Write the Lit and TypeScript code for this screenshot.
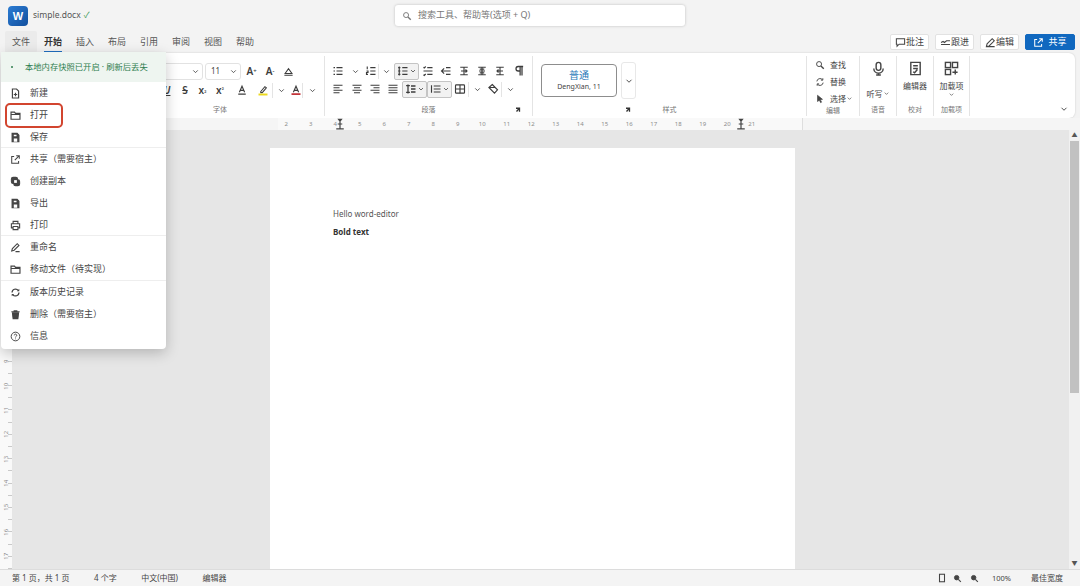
import { LitElement, html, svg, css, nothing } from 'lit'
import { customElement } from 'lit/decorators.js'

const I: Record<string, unknown> = {
	chev: svg`<path d="M4 6l4 4 4-4"/>`,
	search: svg`<circle cx="6.5" cy="6.5" r="4"/><path d="M9.5 9.5l4.5 4.5" stroke-width="2.2"/>`,
	bullets: svg`<path d="M2 3.5h2M2 8h2M2 12.5h2M6 3.5h8M6 8h8M6 12.5h8"/>`,
	numbered: svg`<path d="M3 2v3.5M2 8h2v2H2v2.500h2M7 3.500h7M7 8h7M7 12.500h7"/>`,
	multi: svg`<path d="M3 2v12M1.500 3.500h3M1.500 8h3M1.500 12.500h3M7 3.500h7M7 8h7M7 12.500h7"/>`,
	sort: svg`<path d="M2 3l1 1 2-2M7 3.500h7M2 8h12M2 13l1 1 2-2M7 12.500h7"/>`,
	outdent: svg`<path d="M2 8h12M5.500 4.500L2 8l3.500 3.500M8 3.500h6M8 12.500h6"/>`,
	ltr: svg`<path d="M3 3h10M3 13h10M8 3v10M4 8h8M10 6l2 2-2 2"/>`,
	mid: svg`<path d="M3 3h10M3 13h10M8 3v10M4 8h8M5 5.500h6M5 10.500h6"/>`,
	rtl: svg`<path d="M3 3h10M3 13h10M8 3v10M4 8h8M6 6L4 8l2 2"/>`,
	pilcrow: svg`<path d="M12 2v12M9.500 2v12M13.500 2H7a3 3 0 0 0 0 6h2.500" stroke-width="1.700"/>`,
	left: svg`<path d="M2 3h12M2 6.300h8M2 9.600h12M2 13h8"/>`,
	center: svg`<path d="M2 3h12M4 6.300h8M2 9.600h12M4 13h8"/>`,
	right: svg`<path d="M2 3h12M6 6.300h8M2 9.600h12M6 13h8"/>`,
	justify: svg`<path d="M2 3h12M2 6.300h12M2 9.600h12M2 13h12"/>`,
	lines: svg`<path d="M4 2v12M1.500 3.500h5M1.500 12.500h5M8 4h6M8 8h6M8 12h6" stroke-width="1.700"/>`,
	indent: svg`<path d="M2 3v10M5 4h9M5 8h9M5 12h9"/>`,
	table: svg`<rect x="2" y="2.500" width="12" height="11" rx="1"/><path d="M2 8h12M8 2.500v11"/>`,
	fill: svg`<path d="M7 2l7 7-4 4.500-7.500-7.500zM2.500 6h9" stroke-width="1.500"/>`,
	a: svg`<path d="M4.500 11L8 3l3.500 8M5.800 8.500h4.400M3 13.500h10" stroke-width="1.500"/>`,
	clear: svg`<path d="M3 11l5-7 5 7zM2 13.500h12" stroke-width="1.500"/>`,
	marker: svg`<path d="M5 10l5.500-6.500 2 1.700L7 11.500H5z" stroke-width="1.400"/><path d="M2 14h12" stroke="#ecd91e" stroke-width="2.600"/>`,
	redA: svg`<path d="M4.500 11L8 3l3.500 8M5.800 8.500h4.400" stroke-width="1.500"/><path d="M2 13.500h12" stroke="#c2353a" stroke-width="2.400"/>`,
	launch: svg`<path d="M4 4.500h7v7M5 11l5.500-6" stroke-width="2.600"/>`,
	replace: svg`<path d="M3 7a5 5 0 0 1 9-2.500M13 9a5 5 0 0 1-9 2.500M12.500 2v3h-3M3.500 14v-3h3" stroke-width="1.500"/>`,
	cursor: svg`<path d="M4 2l8 6.500-3.500.500 2 4-1.500.800-2-4L4 12z" fill="currentColor" stroke-width="1"/>`,
	mic: svg`<rect x="5.500" y="1.500" width="5" height="8.500" rx="2.500"/><path d="M3 8a5 5 0 0 0 10 0M8 13v2M5.500 15h5"/>`,
	editor: svg`<path d="M3 1.500h10v13H3zM5.500 5h5M5.500 8h5M5.500 11.500l1.500 1 3-3.500"/>`,
	addins: svg`<rect x="1.500" y="1.500" width="5.500" height="5.500"/><rect x="9" y="1.500" width="5.500" height="5.500"/><rect x="1.500" y="9" width="5.500" height="5.500"/><path d="M12 9v5.500M9 12h5.500"/>`,
	comment: svg`<path d="M2 2.500h12v8H6l-3 3v-3H2z"/>`,
	track: svg`<path d="M1.500 11h13M1.500 8l3-1.500 2 1.500 3-2.500h5"/>`,
	pen: svg`<path d="M2 14l1-4 7.500-7.500 3 3L6 13zM2 14h12"/>`,
	share: svg`<path d="M9 2.500h4.500V7M13.500 2.500L7 9M6 3.500H2.500v10h10V10"/>`,
	newdoc: svg`<path d="M3.500 1.500h6l3 3v10h-9zM8 7v5M5.500 9.500h5" stroke-width="1.700"/>`,
	folder: svg`<path d="M1.500 3h5l1.500 2h6.500v8.500h-13zM1.500 6.500h13" stroke-width="1.700"/>`,
	save: svg`<path d="M3 2h7.500L13 4.500V14H3z" fill="currentColor"/><path d="M5.500 4h4v2h-4zM5.500 9.500h5V14h-5z" fill="#fff" stroke="none"/>`,
	copy: svg`<rect x="2" y="2" width="9" height="9" rx="2.500" fill="currentColor"/><rect x="5.500" y="5.500" width="8.500" height="8.500" rx="2.500" fill="currentColor"/><rect x="6" y="6" width="4" height="4" fill="#fff" stroke="none"/>`,
	print: svg`<path d="M4.500 5V2h7v3M4.500 11.500H2V5.500h12v6h-2.500M4.500 9.500h7V14h-7z" stroke-width="1.600"/>`,
	pencil: svg`<path d="M2.500 13l1-3.500 7-7 2.500 2.500-7 7zM8 14h6" stroke-width="1.600"/>`,
	history: svg`<path d="M3 8a5 5 0 0 1 9-3M13 8a5 5 0 0 1-9 3" stroke-width="1.800"/><path d="M13.500 2.500V6H10zM2.500 13.500V10H6z" fill="currentColor" stroke="none"/>`,
	trash: svg`<path d="M2 4h12M6 4V2.500h4V4" stroke-width="1.500"/><path d="M3.500 5.500h9L11.500 14h-7z" fill="currentColor"/>`,
	info: svg`<circle cx="8" cy="8" r="6.300" stroke-width="1.400"/><path d="M6.200 6.300a1.800 1.800 0 1 1 2.700 1.600c-.6.300-.9.700-.9 1.400M8 11v1" stroke-width="1.400"/>`,
	pageview: svg`<rect x="4" y="2" width="8" height="12" stroke-width="1.700"/>`,
	zoomin: svg`<circle cx="6.500" cy="6.500" r="4" fill="currentColor"/><path d="M9.500 9.500l4.500 4.500" stroke-width="2"/>`,
	stop: svg`<path d="M4.500 1h7L8 5.500z" fill="currentColor" stroke="none"/><path d="M8 5v9M3 14.500h10M5 8h6" stroke-width="1.600"/>`,
}

const icon = (name: string, size = 12) =>
	html`<svg class="ic" width=${size} height=${size} viewBox="0 0 16 16">${I[name]}</svg>`

type Slot = { i?: string; t?: unknown; w: number; box?: boolean; sep?: boolean; s?: number }

const sup = (c: string, m: string) => html`${c}<sup>${m}</sup>`
const sub = (c: string, m: string) => html`${c}<sub>${m}</sub>`

const fontRow2: Slot[] = [
	{ t: html`<u><i>U</i></u>`, w: 18 },
	{ t: html`<s>S</s>`, w: 18 },
	{ t: sub('x', '₂'), w: 17 },
	{ t: sup('x', '²'), w: 18 },
	{ i: 'a', w: 25 },
	{ i: 'marker', w: 18 },
	{ sep: true, w: 1 },
	{ i: 'chev', w: 16, s: 9 },
	{ i: 'redA', w: 13 },
	{ sep: true, w: 1 },
	{ i: 'chev', w: 18, s: 9 },
]
const paraRow1: Slot[] = [
	{ i: 'bullets', w: 18 },
	{ i: 'chev', w: 16, s: 9 },
	{ i: 'numbered', w: 15 },
	{ sep: true, w: 1 },
	{ i: 'chev', w: 15, s: 9 },
	{ i: 'multi', w: 25, box: true },
	{ i: 'sort', w: 18 },
	{ i: 'outdent', w: 18 },
	{ i: 'ltr', w: 18 },
	{ i: 'mid', w: 18 },
	{ i: 'rtl', w: 18 },
	{ i: 'pilcrow', w: 19 },
]
const paraRow2: Slot[] = [
	{ i: 'left', w: 18 },
	{ i: 'center', w: 19 },
	{ i: 'right', w: 18 },
	{ i: 'justify', w: 18 },
	{ i: 'lines', w: 25, box: true },
	{ i: 'indent', w: 25, box: true },
	{ i: 'table', w: 16 },
	{ sep: true, w: 1 },
	{ i: 'chev', w: 16, s: 9 },
	{ i: 'fill', w: 16 },
	{ sep: true, w: 1 },
	{ i: 'chev', w: 16, s: 9 },
]

const tabs = ['文件', '开始', '插入', '布局', '引用', '审阅', '视图', '帮助']

const menu = [
	[
		['newdoc', '新建'],
		['folder', '打开'],
		['save', '保存'],
	],
	[
		['share', '共享（需要宿主）'],
		['copy', '创建副本'],
		['save', '导出'],
		['print', '打印'],
	],
	[
		['pencil', '重命名'],
		['folder', '移动文件（待实现）'],
	],
	[
		['history', '版本历史记录'],
		['trash', '删除（需要宿主）'],
		['info', '信息'],
	],
]

const hNums = Array.from({ length: 20 }, (_, k) => k + 2)
const vNums = Array.from({ length: 17 }, (_, k) => k + 1)

@customElement('app-root')
export class AppRoot extends LitElement {
	static styles = css`
		:host {
			display: flex;
			flex-direction: column;
			position: relative;
			width: 1080px;
			height: 586px;
			overflow: hidden;
			background: #f3f3f3;
			color: #444;
			font: 9px/1.2 'Noto Sans', 'Noto Sans CJK SC', sans-serif;
		}
		.ic {
			display: block;
			flex: none;
			fill: none;
			stroke: currentColor;
			stroke-width: 1.5;
		}
		.title {
			display: grid;
			grid-template-columns: 395px 290px 1fr;
			align-items: center;
			height: 31px;
			flex: none;
		}
		.brand {
			display: flex;
			align-items: center;
			padding-left: 8px;
			font-size: 8.5px;
			color: #555;
		}
		.logo {
			display: flex;
			align-items: center;
			justify-content: center;
			width: 20px;
			height: 20px;
			margin-right: 5px;
			border-radius: 4px;
			background: linear-gradient(135deg, #2b7cd3, #124f9e);
			color: #fff;
			font: bold 11px 'Liberation Sans', sans-serif;
		}
		.ok {
			margin-left: 3px;
			color: #3f9a58;
		}
		.search {
			display: flex;
			align-items: center;
			gap: 6px;
			height: 21px;
			padding-left: 7px;
			border-radius: 3px;
			background: #fff;
			box-shadow: 0 0 3px rgba(0, 0, 0, 0.22);
			color: #777;
		}
		.tabs {
			display: flex;
			align-items: center;
			height: 22px;
			flex: none;
			padding: 0 5px;
		}
		.tab {
			position: relative;
			display: flex;
			align-items: center;
			height: 22px;
			padding: 0 7px;
			color: #555;
		}
		.tab.hover {
			background: #ebebeb;
			border-radius: 2px;
		}
		.tab.on {
			font-weight: 700;
			color: #333;
		}
		.tab.on::after {
			content: '';
			position: absolute;
			left: 7px;
			right: 7px;
			bottom: 0;
			height: 2px;
			background: #1f6fc0;
		}
		.actions {
			display: flex;
			gap: 6px;
			margin-left: auto;
		}
		.act {
			display: flex;
			align-items: center;
			justify-content: center;
			width: 39px;
			height: 16px;
			box-sizing: border-box;
			border: 1px solid #e2e2e2;
			border-radius: 2px;
			background: #fff;
		}
		.act.primary {
			width: 50px;
			gap: 4px;
			border-color: #1068bf;
			background: #1068bf;
			color: #fff;
		}
		.ribbon {
			display: flex;
			flex: none;
			box-sizing: border-box;
			height: 65px;
			margin: 0 5px;
			padding: 3px 0 2px;
			border-radius: 6px;
			background: #fff;
			box-shadow: 0 0 2px rgba(0, 0, 0, 0.18);
		}
		.grp {
			display: flex;
			flex-direction: column;
			flex: none;
			box-sizing: border-box;
			padding-top: 6px;
			border-right: 1px solid #e4e4e4;
		}
		.lbl {
			display: grid;
			grid-template-columns: 1fr auto 1fr;
			align-items: center;
			margin-top: auto;
			height: 12px;
			margin-bottom: 0;
			font-size: 7px;
			color: #777;
			text-align: center;
		}
		.launch-r {
			grid-column: 3;
			grid-row: 1;
			justify-self: end;
			margin-right: 10px;
			color: #333;
		}
		.launch-l {
			grid-column: 1;
			grid-row: 1;
			justify-self: end;
			margin-right: 31px;
			color: #333;
		}
		.lbl span {
			grid-row: 1;
		}
		.lbl .name {
			grid-column: 2;
		}
		.row {
			display: flex;
			align-items: center;
			height: 18px;
		}
		.gap {
			margin-top: 1px;
		}
		.slot {
			display: flex;
			align-items: center;
			justify-content: center;
			flex: none;
			height: 17px;
			box-sizing: border-box;
			font-size: 10px;
			font-weight: 600;
			color: #3c3c3c;
		}
		.slot sup,
		.slot sub {
			font-size: 6px;
			line-height: 0;
		}
		.slot.box {
			border: 1px solid #c4c4c4;
			border-radius: 2px;
			background: #f2f2f2;
		}
		.vsep {
			flex: none;
			align-self: center;
			width: 1px;
			height: 15px;
			background: #e4e4e4;
		}
		.sel {
			display: flex;
			align-items: center;
			justify-content: space-between;
			box-sizing: border-box;
			height: 17px;
			padding: 0 2px 0 5px;
			border: 1px solid #e2e2e2;
			border-radius: 3px;
			font-size: 8px;
		}
		.sel.name {
			justify-content: flex-end;
			width: 87px;
		}
		.sel.size {
			width: 36px;
			margin-left: 2px;
		}
		.styles {
			display: flex;
			align-items: center;
			gap: 4px;
			padding-left: 8px;
		}
		.style {
			display: flex;
			flex-direction: column;
			align-items: center;
			justify-content: center;
			gap: 2px;
			width: 76px;
			height: 33px;
			box-sizing: border-box;
			border: 1px solid #8d8d8d;
			border-radius: 4px;
			font-size: 7px;
		}
		.style b {
			font-size: 10px;
			font-weight: 400;
			color: #2b79b8;
		}
		.more {
			display: flex;
			align-items: center;
			justify-content: center;
			width: 15px;
			height: 37px;
			box-sizing: border-box;
			border: 1px solid #e8e8e8;
			border-radius: 3px;
		}
		.edit {
			margin-top: -6px;
			padding-left: 8px;
		}
		.edit div {
			display: flex;
			align-items: center;
			gap: 5px;
			height: 17px;
			font-size: 8px;
		}
		.edit .tail {
			margin-left: -5px;
		}
		.big {
			display: flex;
			flex-direction: column;
			align-items: center;
			margin-top: -1px;
			font-size: 8px;
			color: #444;
		}
		.big .cap {
			display: flex;
			align-items: center;
			height: 11px;
			margin-top: 4px;
		}
		.big .cap.low {
			margin-top: 12px;
		}
		.fold {
			align-self: flex-end;
			margin: 0 6px 2px auto;
		}
		.ruler {
			position: relative;
			display: flex;
			flex: none;
			height: 12px;
			padding-left: 278px;
			background: #f5f5f5;
		}
		.scale {
			display: flex;
			width: 524px;
			background: #f9f9f9;
			border-right: 1px solid #dedede;
			font-size: 6px;
			color: #8c8c8c;
		}
		.scale span {
			flex: none;
			width: 24.5px;
			line-height: 12px;
			text-align: center;
			transform: translateX(-4px);
		}
		.stop {
			position: absolute;
			top: 0;
			color: #444;
		}
		.body {
			display: flex;
			flex: 1;
			min-height: 0;
		}
		.vruler {
			flex: none;
			width: 12px;
			box-sizing: border-box;
			padding-top: 24px;
			background:
				repeating-linear-gradient(to bottom, transparent 0 11.200px, #c9c9c9 11.200px 12.200px) right 0 top 12px / 4px 100% no-repeat,
				#f9f9f9;
			font-size: 6px;
			color: #8c8c8c;
		}
		.vruler span {
			display: block;
			height: 24.400px;
			line-height: 24.400px;
			text-align: center;
			transform: rotate(-90deg);
		}
		.canvas {
			flex: 1;
			min-width: 0;
			padding: 18px 0 0 258px;
			background: #e6e6e6;
			overflow: hidden;
		}
		.page {
			box-sizing: border-box;
			width: 525px;
			height: 100%;
			padding: 57px 63px 0;
			background: #fff;
			font-size: 8px;
			line-height: 18px;
			color: #555;
		}
		.page b {
			color: #333;
		}
		.scroll {
			display: flex;
			flex-direction: column;
			align-items: center;
			flex: none;
			width: 11px;
			background: #f1f1f1;
			font-size: 6px;
			color: #555;
		}
		.arrow {
			display: flex;
			align-items: center;
			justify-content: center;
			flex: none;
			height: 11px;
		}
		.thumb {
			width: 9px;
			height: 252px;
			background: #c1c1c1;
		}
		.status {
			display: flex;
			align-items: center;
			flex: none;
			height: 17px;
			box-sizing: border-box;
			padding: 0 17px 0 12px;
			border-top: 1px solid #dcdcdc;
			background: #f4f4f4;
			font-size: 8px;
			color: #444;
		}
		.status .l {
			margin-right: 24.5px;
		}
		.status .tools {
			display: flex;
			align-items: center;
			margin-left: auto;
		}
		.pct {
			margin: 0 20px 0 13px;
			font-size: 7.5px;
		}
		.menu {
			position: absolute;
			left: 1px;
			top: 52px;
			width: 165px;
			padding-bottom: 2px;
			border-radius: 4px;
			background: #fff;
			box-shadow: 0 4px 14px rgba(0, 0, 0, 0.22);
		}
		.notice {
			display: flex;
			align-items: center;
			height: 30px;
			padding-left: 10px;
			background: #eef5f0;
			font-size: 8.3px;
			color: #2f7d4f;
		}
		.dot {
			width: 2px;
			height: 2px;
			margin-right: 12px;
			border-radius: 50%;
			background: #2f7d4f;
		}
		.sec + .sec {
			box-shadow: 0 -1px 0 #eeeeee;
		}
		.sec:last-child {
			margin-top: 1px;
		}
		.item {
			position: relative;
			display: flex;
			align-items: center;
			gap: 9px;
			height: 22px;
			padding-left: 9px;
			color: #444;
		}
		.item.mark::after {
			content: '';
			position: absolute;
			left: 4px;
			top: -1px;
			width: 54px;
			height: 21px;
			border: 2px solid #d2452f;
			border-radius: 5px;
		}
	`

	private slots(list: Slot[]) {
		return list.map(s =>
			s.sep
				? html`<span class="vsep"></span>`
				: html`<span class="slot ${s.box ? 'box' : ''}" style="width:${s.w}px">
						${s.i ? icon(s.i, s.s ?? 12) : s.t}
						${s.box ? icon('chev', 8) : nothing}
				  </span>`,
		)
	}

	private label(text: string, launcher?: string) {
		return html`<div class="lbl">
			${launcher ? html`<span class=${launcher}>${icon('launch', 8)}</span>` : nothing}
			<span class="name">${text}</span>
		</div>`
	}

	render() {
		return html`
			<div class="title">
				<div class="brand"><span class="logo">W</span>simple.docx<span class="ok">✓</span></div>
				<div class="search">${icon('search', 10)}搜索工具、帮助等(选项 + Q)</div>
			</div>
			<div class="tabs">
				${tabs.map((t, k) => html`<span class="tab ${k === 0 ? 'hover' : ''} ${k === 1 ? 'on' : ''}">${t}</span>`)}
				<div class="actions">
					<span class="act">${icon('comment', 11)}批注</span>
					<span class="act">${icon('track', 11)}跟进</span>
					<span class="act">${icon('pen', 11)}编辑</span>
					<span class="act primary">${icon('share', 11)}共享</span>
				</div>
			</div>
			<div class="ribbon">
				<div style="width:111px;flex:none"></div>
				<div class="grp" style="width:209px">
					<div class="row">
						<span class="sel name">${icon('chev', 9)}</span>
						<span class="sel size">11${icon('chev', 9)}</span>
						<span class="slot" style="width:19px;margin-left:1px">${sup('A', '+')}</span>
						<span class="slot" style="width:18px">${sup('A', '-')}</span>
						<span class="slot" style="width:18px">${icon('clear', 11)}</span>
					</div>
					<div class="row gap" style="padding-left:42px">${this.slots(fontRow2)}</div>
					${this.label('字体')}
				</div>
				<div class="grp" style="width:208px">
					<div class="row" style="padding-left:4px">${this.slots(paraRow1)}</div>
					<div class="row" style="padding-left:4px">${this.slots(paraRow2)}</div>
					${this.label('段落', 'launch-r')}
				</div>
				<div class="grp" style="width:274px">
					<div class="styles">
						<div class="style"><b>普通</b>DengXian, 11</div>
						<div class="more">${icon('chev', 10)}</div>
					</div>
					${this.label('样式', 'launch-l')}
				</div>
				<div class="grp" style="width:53px">
					<div class="edit">
						<div>${icon('search', 10)}查找</div>
						<div>${icon('replace', 10)}替换</div>
						<div>${icon('cursor', 10)}选择<span class="tail">${icon('chev', 7)}</span></div>
					</div>
					${this.label('编辑')}
				</div>
				<div class="grp" style="width:37px">
					<div class="big">${icon('mic', 15)}<span class="cap low">听写${icon('chev', 7)}</span></div>
					${this.label('语音')}
				</div>
				<div class="grp" style="width:37px">
					<div class="big">${icon('editor', 15)}<span class="cap">编辑器</span></div>
					${this.label('校对')}
				</div>
				<div class="grp" style="width:36px">
					<div class="big">${icon('addins', 15)}<span class="cap">加载项</span>${icon('chev', 7)}</div>
					${this.label('加载项')}
				</div>
				<span class="fold">${icon('chev', 10)}</span>
			</div>
			<div class="ruler">
				<div class="scale">${hNums.map(n => html`<span>${n}</span>`)}</div>
				<span class="stop" style="left:334px">${icon('stop', 12)}</span>
				<span class="stop" style="left:735px">${icon('stop', 12)}</span>
			</div>
			<div class="body">
				<div class="vruler">${vNums.map(n => html`<span>${n}</span>`)}</div>
				<div class="canvas">
					<div class="page">
						<div>Hello word-editor</div>
						<div><b>Bold text</b></div>
					</div>
				</div>
				<div class="scroll">
					<span class="arrow">▲</span>
					<div class="thumb"></div>
					<span class="arrow" style="margin-top:auto">▼</span>
				</div>
			</div>
			<div class="status">
				<span class="l">第 1 页，共 1 页</span>
				<span class="l">4 个字</span>
				<span class="l">中文(中国)</span>
				<span>编辑器</span>
				<div class="tools">
					${icon('pageview', 10)}
					<span style="width:6px"></span>${icon('zoomin', 9)}
					<span style="width:8px"></span>${icon('zoomin', 9)}
					<span class="pct">100%</span>
					<span>最佳宽度</span>
				</div>
			</div>
			<div class="menu">
				<div class="notice"><span class="dot"></span>本地内存快照已开启 · 刷新后丢失</div>
				${menu.map(
					(sec, a) => html`<div class="sec">
						${sec.map(
							([ic, text], b) => html`<div class="item ${a === 0 && b === 1 ? 'mark' : ''}">${icon(ic, 11)}<span>${text}</span></div>`,
						)}
					</div>`,
				)}
			</div>
		`
	}
}
